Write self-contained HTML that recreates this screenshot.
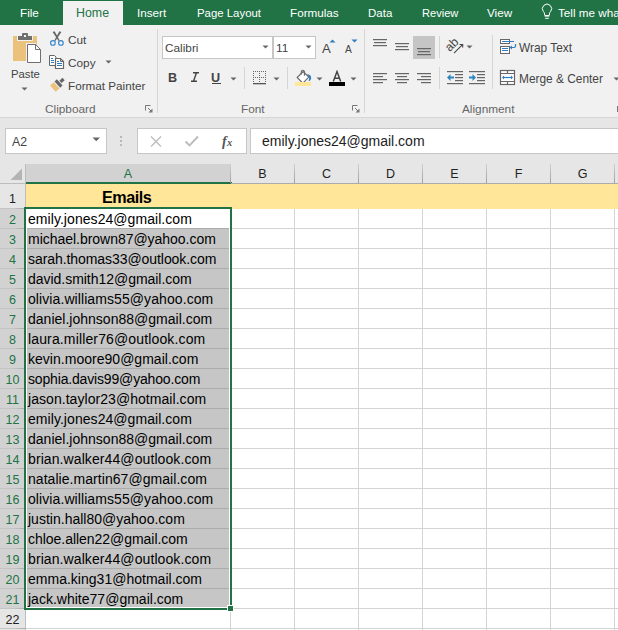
<!DOCTYPE html>
<html><head><meta charset="utf-8"><style>
html,body{margin:0;padding:0;}
body{width:618px;height:630px;overflow:hidden;position:relative;background:#fff;font-family:"Liberation Sans", sans-serif;}
body>div{position:absolute;}
</style></head><body>
<div style="left:0px;top:0px;width:618px;height:25px;background:#217346"></div>
<div style="left:63px;top:1px;width:60px;height:26px;background:#f1f1f1"></div>
<div style="left:20px;top:6px;font-size:11.7px;color:#ffffff;font-weight:normal;white-space:nowrap;line-height:normal;">File</div>
<div style="left:137px;top:6px;font-size:11.7px;color:#ffffff;font-weight:normal;white-space:nowrap;line-height:normal;">Insert</div>
<div style="left:197px;top:7px;font-size:11.4px;color:#ffffff;font-weight:normal;white-space:nowrap;line-height:normal;">Page Layout</div>
<div style="left:290px;top:6px;font-size:11.7px;color:#ffffff;font-weight:normal;white-space:nowrap;line-height:normal;">Formulas</div>
<div style="left:368px;top:7px;font-size:11.5px;color:#ffffff;font-weight:normal;white-space:nowrap;line-height:normal;">Data</div>
<div style="left:422px;top:7px;font-size:11.1px;color:#ffffff;font-weight:normal;white-space:nowrap;line-height:normal;">Review</div>
<div style="left:487px;top:6px;font-size:11.7px;color:#ffffff;font-weight:normal;white-space:nowrap;line-height:normal;">View</div>
<div style="left:558px;top:6px;font-size:11.7px;color:#ffffff;font-weight:normal;white-space:nowrap;line-height:normal;">Tell me wha</div>
<div style="left:76px;top:6px;font-size:12.4px;color:#217346;font-weight:normal;white-space:nowrap;line-height:normal;">Home</div>
<svg style="position:absolute;left:539px;top:3px" width="16" height="17" viewBox="0 0 16 17"><path d="M5.6 12.2V10.9C5.6 9.9 5 9.3 4.4 8.6A4.6 4.6 0 1 1 11.6 8.6C11 9.3 10.4 9.9 10.4 10.9V12.2" fill="none" stroke="#fff" stroke-width="1"/><path d="M5.6 12.8H10.4" stroke="#fff" stroke-width="1.6"/><path d="M6.2 15.3H9.8" stroke="#fff" stroke-width="1"/></svg>
<div style="left:0px;top:25px;width:618px;height:92px;background:#f1f1f1"></div>
<div style="left:0px;top:117px;width:618px;height:1px;background:#d6d6d6"></div>
<svg style="position:absolute;left:12px;top:32px" width="32" height="32" viewBox="0 0 32 32"><rect x="1" y="4" width="24" height="25" fill="#eac27c"/><rect x="5" y="3" width="16" height="6" fill="#f1f1f1"/><rect x="6" y="4" width="14" height="4" fill="#6f6f6f"/><rect x="10" y="1" width="6" height="4" rx="1" fill="#6f6f6f"/><rect x="12" y="3" width="2" height="2" fill="#f1f1f1"/><path d="M14 11H24V31H14z" fill="#f1f1f1"/><path d="M15.5 12.5H23.5L28.5 17.5V30.5H15.5z" fill="#fff" stroke="#6f6f6f" stroke-width="1"/><path d="M23.5 12.5V17.5H28.5" fill="none" stroke="#6f6f6f" stroke-width="1"/></svg>
<div style="left:11px;top:68px;font-size:11.3px;color:#444444;font-weight:normal;white-space:nowrap;line-height:normal;">Paste</div>
<svg style="position:absolute;left:21px;top:87px" width="8" height="5" viewBox="0 0 8 5"><path d="M0.5 0.5H6.5L3.5 3.5z" fill="#666666"/></svg>
<svg style="position:absolute;left:48px;top:30px" width="18" height="18" viewBox="0 0 18 18"><path d="M4.6 2.1L6.6 1.3L11.7 10.5L10.6 11.1z" fill="#666"/><path d="M13.4 2.1L11.4 1.3L6.3 10.5L7.4 11.1z" fill="#666"/><circle cx="4.9" cy="12.9" r="2.3" fill="none" stroke="#3487c9" stroke-width="1.15"/><circle cx="12.9" cy="12.9" r="2.3" fill="none" stroke="#3487c9" stroke-width="1.15"/></svg>
<div style="left:68px;top:33px;font-size:11.8px;color:#444444;font-weight:normal;white-space:nowrap;line-height:normal;">Cut</div>
<svg style="position:absolute;left:48px;top:54px" width="18" height="16" viewBox="0 0 18 16"><path d="M1.5 1.5H6.5L8 3V11.5H1.5z" fill="#fff" stroke="#666" stroke-width="1"/><path d="M3 4.5H5M3 6.5H6M3 8.5H6" stroke="#2e7dc1" stroke-width="1"/><path d="M7.5 4.5H12.5L15.5 7.5V14.5H7.5z" fill="#fff" stroke="#666" stroke-width="1.2"/><path d="M12.5 4.5V7.5H15.5" fill="none" stroke="#666" stroke-width="1"/><path d="M9 7.5H11M9 9.5H14M9 11.5H14" stroke="#2e7dc1" stroke-width="1"/></svg>
<div style="left:68px;top:56px;font-size:11.8px;color:#444444;font-weight:normal;white-space:nowrap;line-height:normal;">Copy</div>
<svg style="position:absolute;left:105px;top:60px" width="8" height="5" viewBox="0 0 8 5"><path d="M0.5 0.5H6.5L3.5 3.5z" fill="#666666"/></svg>
<svg style="position:absolute;left:46px;top:74px" width="22" height="22" viewBox="0 0 22 22"><g transform="translate(11.5 10.5) rotate(-42)"><rect x="4" y="-1.6" width="4.2" height="3.2" fill="#666"/><rect x="-0.2" y="-4.2" width="3.2" height="8.4" fill="#666"/><path d="M-6.3 -4.2H-1.2V4.2H-6.3z" fill="#eac27c"/></g></svg>
<div style="left:68px;top:79px;font-size:11.7px;color:#444444;font-weight:normal;white-space:nowrap;line-height:normal;">Format Painter</div>
<div style="left:45px;top:102px;font-size:11.8px;color:#666666;font-weight:normal;white-space:nowrap;line-height:normal;">Clipboard</div>
<svg style="position:absolute;left:145px;top:105px" width="9" height="9" viewBox="0 0 9 9"><path d="M0.5 5.5V0.5H5.5" fill="none" stroke="#777" stroke-width="1"/><path d="M3 3L7 7" stroke="#777" stroke-width="1"/><path d="M7.5 3.5V7.5H3.5z" fill="#777"/></svg>
<div style="left:157px;top:29px;width:1px;height:84px;background:#d5d5d5"></div>
<div style="left:162px;top:36px;width:111px;height:23px;background:#fff;border:1px solid #c6c6c6;box-sizing:border-box"></div>
<div style="left:165px;top:41px;font-size:11.8px;color:#444;font-weight:normal;white-space:nowrap;line-height:normal;">Calibri</div>
<svg style="position:absolute;left:262px;top:45px" width="8" height="5" viewBox="0 0 8 5"><path d="M0.5 0.5H6.5L3.5 3.5z" fill="#666666"/></svg>
<div style="left:273px;top:36px;width:43px;height:23px;background:#fff;border:1px solid #c6c6c6;box-sizing:border-box"></div>
<div style="left:276px;top:41px;font-size:11.8px;color:#444;font-weight:normal;white-space:nowrap;line-height:normal;">11</div>
<svg style="position:absolute;left:305px;top:45px" width="8" height="5" viewBox="0 0 8 5"><path d="M0.5 0.5H6.5L3.5 3.5z" fill="#666666"/></svg>
<div style="left:322px;top:41px;font-size:13.2px;color:#444;font-weight:normal;white-space:nowrap;line-height:normal;">A</div>
<svg style="position:absolute;left:329px;top:39px" width="8" height="5" viewBox="0 0 8 5"><path d="M0.5 3.5H6.5L3.5 0.5z" fill="#2e7dc1"/></svg>
<div style="left:345px;top:44px;font-size:10.2px;color:#444;font-weight:normal;white-space:nowrap;line-height:normal;">A</div>
<svg style="position:absolute;left:351px;top:39px" width="8" height="5" viewBox="0 0 8 5"><path d="M0.5 0.5H6.5L3.5 3.5z" fill="#2e7dc1"/></svg>
<div style="left:168px;top:71px;font-size:12.6px;color:#444;font-weight:bold;white-space:nowrap;line-height:normal;">B</div>
<svg style="position:absolute;left:189px;top:72px" width="12" height="11" viewBox="0 0 12 11"><path d="M4 0.8H10M2 9.2H8M7.5 0.8L4.5 9.2" stroke="#444" stroke-width="1.4" fill="none"/></svg>
<div style="left:211px;top:71px;font-size:12.6px;color:#444;font-weight:bold;white-space:nowrap;line-height:normal;">U</div>
<div style="left:212px;top:83px;width:9px;height:1px;background:#444"></div>
<svg style="position:absolute;left:230px;top:77px" width="8" height="5" viewBox="0 0 8 5"><path d="M0.5 0.5H6.5L3.5 3.5z" fill="#666666"/></svg>
<div style="left:244px;top:67px;width:1px;height:22px;background:#d5d5d5"></div>
<svg style="position:absolute;left:252px;top:70px" width="16" height="16" viewBox="0 0 16 16"><rect x="1" y="1" width="1" height="1" fill="#666"/><rect x="3" y="1" width="1" height="1" fill="#666"/><rect x="5" y="1" width="1" height="1" fill="#666"/><rect x="7" y="1" width="1" height="1" fill="#666"/><rect x="9" y="1" width="1" height="1" fill="#666"/><rect x="11" y="1" width="1" height="1" fill="#666"/><rect x="13" y="1" width="1" height="1" fill="#666"/><rect x="1" y="3" width="1" height="1" fill="#666"/><rect x="7" y="3" width="1" height="1" fill="#666"/><rect x="13" y="3" width="1" height="1" fill="#666"/><rect x="1" y="5" width="1" height="1" fill="#666"/><rect x="7" y="5" width="1" height="1" fill="#666"/><rect x="13" y="5" width="1" height="1" fill="#666"/><rect x="1" y="7" width="1" height="1" fill="#666"/><rect x="3" y="7" width="1" height="1" fill="#666"/><rect x="5" y="7" width="1" height="1" fill="#666"/><rect x="7" y="7" width="1" height="1" fill="#666"/><rect x="9" y="7" width="1" height="1" fill="#666"/><rect x="11" y="7" width="1" height="1" fill="#666"/><rect x="13" y="7" width="1" height="1" fill="#666"/><rect x="1" y="9" width="1" height="1" fill="#666"/><rect x="7" y="9" width="1" height="1" fill="#666"/><rect x="13" y="9" width="1" height="1" fill="#666"/><rect x="1" y="11" width="1" height="1" fill="#666"/><rect x="7" y="11" width="1" height="1" fill="#666"/><rect x="13" y="11" width="1" height="1" fill="#666"/><rect x="1" y="13" width="13" height="1.3" fill="#555"/></svg>
<svg style="position:absolute;left:273px;top:77px" width="8" height="5" viewBox="0 0 8 5"><path d="M0.5 0.5H6.5L3.5 3.5z" fill="#666666"/></svg>
<div style="left:287px;top:67px;width:1px;height:22px;background:#d5d5d5"></div>
<svg style="position:absolute;left:294px;top:68px" width="20" height="20" viewBox="0 0 20 20"><path d="M3.2 9.5L9.2 3.5L14.8 9.1L8.8 15.1z" fill="#fff" stroke="#666" stroke-width="1.1"/><path d="M7.3 6.5V3.5A1.6 1.6 0 0 1 10.4 3.5V7.8" fill="none" stroke="#666" stroke-width="1.1"/><path d="M13.2 6.3C15.6 6.4 17.3 7.9 17.2 9.9C17.1 11.5 15.7 13 14.6 13.2L15.3 9.6z" fill="#2e7dc1"/><rect x="1" y="14" width="16" height="4" fill="#ffe699"/></svg>
<svg style="position:absolute;left:316px;top:77px" width="8" height="5" viewBox="0 0 8 5"><path d="M0.5 0.5H6.5L3.5 3.5z" fill="#666666"/></svg>
<svg style="position:absolute;left:330px;top:70px" width="14" height="13" viewBox="0 0 14 13"><path d="M3.3 11.6L7 1.6L10.7 11.6M4.6 8.3H9.4" fill="none" stroke="#444" stroke-width="1.5"/></svg>
<div style="left:329px;top:82px;width:16px;height:4px;background:#000"></div>
<svg style="position:absolute;left:350px;top:77px" width="8" height="5" viewBox="0 0 8 5"><path d="M0.5 0.5H6.5L3.5 3.5z" fill="#666666"/></svg>
<div style="left:241px;top:102px;font-size:11.8px;color:#666666;font-weight:normal;white-space:nowrap;line-height:normal;">Font</div>
<svg style="position:absolute;left:352px;top:105px" width="9" height="9" viewBox="0 0 9 9"><path d="M0.5 5.5V0.5H5.5" fill="none" stroke="#777" stroke-width="1"/><path d="M3 3L7 7" stroke="#777" stroke-width="1"/><path d="M7.5 3.5V7.5H3.5z" fill="#777"/></svg>
<div style="left:364px;top:29px;width:1px;height:84px;background:#d5d5d5"></div>
<svg style="position:absolute;left:372px;top:39px" width="20" height="16" viewBox="0 0 20 16"><rect x="1" y="0" width="14" height="1.2" fill="#666"/><rect x="2" y="3" width="12" height="1.2" fill="#666"/><rect x="1" y="6" width="14" height="1.2" fill="#666"/></svg>
<svg style="position:absolute;left:394px;top:43px" width="20" height="16" viewBox="0 0 20 16"><rect x="1" y="0" width="14" height="1.2" fill="#666"/><rect x="2" y="3" width="12" height="1.2" fill="#666"/><rect x="1" y="6" width="14" height="1.2" fill="#666"/></svg>
<div style="left:413px;top:36px;width:22px;height:23px;background:#c5c5c5"></div>
<svg style="position:absolute;left:416px;top:48px" width="20" height="16" viewBox="0 0 20 16"><rect x="1" y="0" width="14" height="1.2" fill="#666"/><rect x="2" y="3" width="12" height="1.2" fill="#666"/><rect x="1" y="6" width="14" height="1.2" fill="#666"/></svg>
<div style="left:439px;top:36px;width:1px;height:22px;background:#d5d5d5"></div>
<svg style="position:absolute;left:444px;top:36px" width="22" height="20" viewBox="0 0 22 20"><g transform="rotate(-45 9 9)"><text x="1.5" y="11.8" font-family="Liberation Sans" font-size="12.3" fill="#444">ab</text></g><path d="M10 17.2L18.5 8.7" stroke="#444" stroke-width="1.1"/><path d="M15.6 8.5H18.7V11.6" fill="none" stroke="#444" stroke-width="1.1"/></svg>
<svg style="position:absolute;left:466px;top:45px" width="8" height="5" viewBox="0 0 8 5"><path d="M0.5 0.5H6.5L3.5 3.5z" fill="#666666"/></svg>
<svg style="position:absolute;left:372px;top:73px" width="20" height="16" viewBox="0 0 20 16"><rect x="1" y="0" width="14" height="1.2" fill="#666"/><rect x="1" y="3" width="10" height="1.2" fill="#666"/><rect x="1" y="6" width="14" height="1.2" fill="#666"/><rect x="1" y="9" width="10" height="1.2" fill="#666"/></svg>
<svg style="position:absolute;left:394px;top:73px" width="20" height="16" viewBox="0 0 20 16"><rect x="1" y="0" width="14" height="1.2" fill="#666"/><rect x="3" y="3" width="10" height="1.2" fill="#666"/><rect x="1" y="6" width="14" height="1.2" fill="#666"/><rect x="3" y="9" width="10" height="1.2" fill="#666"/></svg>
<svg style="position:absolute;left:416px;top:73px" width="20" height="16" viewBox="0 0 20 16"><rect x="1" y="0" width="14" height="1.2" fill="#666"/><rect x="5" y="3" width="10" height="1.2" fill="#666"/><rect x="1" y="6" width="14" height="1.2" fill="#666"/><rect x="5" y="9" width="10" height="1.2" fill="#666"/></svg>
<div style="left:439px;top:67px;width:1px;height:22px;background:#d5d5d5"></div>
<svg style="position:absolute;left:446px;top:70px" width="18" height="16" viewBox="0 0 18 16"><rect x="1" y="1" width="16" height="1.2" fill="#666"/><rect x="9" y="4" width="8" height="1.2" fill="#666"/><rect x="9" y="7" width="8" height="1.2" fill="#666"/><rect x="9" y="10" width="8" height="1.2" fill="#666"/><rect x="1" y="13" width="16" height="1.2" fill="#666"/><path d="M1 7.5L4.5 4V6.5H8V8.5H4.5V11z" fill="#2e86c1"/></svg>
<svg style="position:absolute;left:468px;top:70px" width="18" height="16" viewBox="0 0 18 16"><rect x="1" y="1" width="16" height="1.2" fill="#666"/><rect x="9" y="4" width="8" height="1.2" fill="#666"/><rect x="9" y="7" width="8" height="1.2" fill="#666"/><rect x="9" y="10" width="8" height="1.2" fill="#666"/><rect x="1" y="13" width="16" height="1.2" fill="#666"/><path d="M8 7.5L4.5 4V6.5H1V8.5H4.5V11z" fill="#2e86c1"/></svg>
<div style="left:492px;top:35px;width:1px;height:54px;background:#d5d5d5"></div>
<svg style="position:absolute;left:499px;top:38px" width="18" height="18" viewBox="0 0 18 18"><rect x="1.5" y="1.5" width="9" height="4" fill="#fff" stroke="#666" stroke-width="1"/><rect x="1.5" y="8.5" width="9" height="7" fill="#fff" stroke="#666" stroke-width="1"/><path d="M3 3.5H15M3 10.5H9M3 12.5H9" stroke="#2e7dc1" stroke-width="1"/><path d="M16.5 6V8A1.5 1.5 0 0 1 15 9.5H11" fill="none" stroke="#2e7dc1" stroke-width="1.2"/><path d="M10.5 9.5L13 7.5V11.5z" fill="#2e7dc1"/></svg>
<div style="left:519px;top:41px;font-size:11.9px;color:#444444;font-weight:normal;white-space:nowrap;line-height:normal;">Wrap Text</div>
<svg style="position:absolute;left:499px;top:69px" width="18" height="18" viewBox="0 0 18 18"><rect x="1.5" y="1.5" width="14" height="14" fill="#fff" stroke="#666" stroke-width="1.2"/><path d="M1.5 4.5H15.5M1.5 12.5H15.5M8.5 1.5V4.5M8.5 12.5V15.5" stroke="#666" stroke-width="1.2"/><path d="M4 8.5H13" stroke="#2e7dc1" stroke-width="1.2"/><path d="M3 8.5L5 6.5V10.5z M14 8.5L12 6.5V10.5z" fill="#2e7dc1"/></svg>
<div style="left:519px;top:72px;font-size:11.9px;color:#444444;font-weight:normal;white-space:nowrap;line-height:normal;">Merge &amp; Center</div>
<svg style="position:absolute;left:613px;top:77px" width="8" height="5" viewBox="0 0 8 5"><path d="M0.5 0.5H6.5L3.5 3.5z" fill="#666666"/></svg>
<div style="left:462px;top:102px;font-size:11.8px;color:#666666;font-weight:normal;white-space:nowrap;line-height:normal;">Alignment</div>
<div style="left:617px;top:106px;width:1px;height:6px;background:#777"></div>
<div style="left:0px;top:118px;width:618px;height:46px;background:#e6e6e6"></div>
<div style="left:5px;top:128px;width:102px;height:26px;background:#fff;border:1px solid #c6c6c6;box-sizing:border-box"></div>
<div style="left:12px;top:135px;font-size:12.3px;color:#444;font-weight:normal;white-space:nowrap;line-height:normal;">A2</div>
<svg style="position:absolute;left:92px;top:137px" width="10" height="6" viewBox="0 0 10 6"><path d="M0.5 0.5H8L4.25 4.25z" fill="#666666"/></svg>
<div style="left:120px;top:136px;width:2px;height:2px;background:#a8a8a8;border-radius:1px"></div>
<div style="left:120px;top:140px;width:2px;height:2px;background:#a8a8a8;border-radius:1px"></div>
<div style="left:120px;top:144px;width:2px;height:2px;background:#a8a8a8;border-radius:1px"></div>
<div style="left:137px;top:128px;width:110px;height:26px;background:#fff;border:1px solid #c6c6c6;box-sizing:border-box"></div>
<svg style="position:absolute;left:150px;top:135px" width="13" height="13" viewBox="0 0 13 13"><path d="M1 1.5L11 11.5M11 1.5L1 11.5" stroke="#bcbcbc" stroke-width="1.3"/></svg>
<svg style="position:absolute;left:184px;top:135px" width="16" height="13" viewBox="0 0 16 13"><path d="M1.5 6.5L5.5 10.5L14 1.5" fill="none" stroke="#bcbcbc" stroke-width="1.9"/></svg>
<svg style="position:absolute;left:220px;top:133px" width="16" height="16" viewBox="0 0 16 16"><text x="2" y="12.5" font-family="Liberation Serif" font-style="italic" font-weight="bold" font-size="14" fill="#555">f</text><text x="7" y="12.5" font-family="Liberation Serif" font-style="italic" font-weight="bold" font-size="10.5" fill="#555">x</text></svg>
<div style="left:250px;top:128px;width:370px;height:26px;background:#fff;border:1px solid #c6c6c6;box-sizing:border-box"></div>
<div style="left:262px;top:133px;font-size:14px;color:#222;font-weight:normal;white-space:nowrap;line-height:normal;">emily.jones24@gmail.com</div>
<div style="left:0px;top:164px;width:618px;height:20px;background:#e6e6e6"></div>
<svg style="position:absolute;left:0px;top:164px" width="26" height="20" viewBox="0 0 26 20"><path d="M10.5 16H22V4.5z" fill="#b4b4b4"/></svg>
<div style="left:25px;top:164px;width:1px;height:466px;background:#bdbdbd"></div>
<div style="left:26px;top:164px;width:205px;height:18px;background:#d2d2d2"></div>
<div style="left:26px;top:182px;width:206px;height:2px;background:#217346"></div>
<div style="left:231px;top:183px;width:387px;height:1px;background:#ababab"></div>
<div style="left:0px;top:183px;width:25px;height:1px;background:#bdbdbd"></div>
<div style="left:230px;top:164px;width:1px;height:19px;background:linear-gradient(#d0d0d0,#9e9e9e)"></div>
<div style="left:294px;top:164px;width:1px;height:19px;background:linear-gradient(#d0d0d0,#9e9e9e)"></div>
<div style="left:358px;top:164px;width:1px;height:19px;background:linear-gradient(#d0d0d0,#9e9e9e)"></div>
<div style="left:422px;top:164px;width:1px;height:19px;background:linear-gradient(#d0d0d0,#9e9e9e)"></div>
<div style="left:486px;top:164px;width:1px;height:19px;background:linear-gradient(#d0d0d0,#9e9e9e)"></div>
<div style="left:550px;top:164px;width:1px;height:19px;background:linear-gradient(#d0d0d0,#9e9e9e)"></div>
<div style="left:614px;top:164px;width:1px;height:19px;background:linear-gradient(#d0d0d0,#9e9e9e)"></div>
<div style="left:26px;top:167px;width:204px;text-align:center;font-size:12.5px;color:#217346;line-height:normal">A</div>
<div style="left:231px;top:167px;width:63px;text-align:center;font-size:12.5px;color:#222;line-height:normal">B</div>
<div style="left:295px;top:167px;width:63px;text-align:center;font-size:12.5px;color:#222;line-height:normal">C</div>
<div style="left:359px;top:167px;width:63px;text-align:center;font-size:12.5px;color:#222;line-height:normal">D</div>
<div style="left:423px;top:167px;width:63px;text-align:center;font-size:12.5px;color:#222;line-height:normal">E</div>
<div style="left:487px;top:167px;width:63px;text-align:center;font-size:12.5px;color:#222;line-height:normal">F</div>
<div style="left:551px;top:167px;width:63px;text-align:center;font-size:12.5px;color:#222;line-height:normal">G</div>
<div style="left:26px;top:184px;width:592px;height:446px;background:#fff"></div>
<div style="left:0px;top:184px;width:25px;height:446px;background:#e6e6e6"></div>
<div style="left:0px;top:209px;width:25px;height:400px;background:#d2d2d2"></div>
<div style="left:294px;top:209px;width:1px;height:421px;background:#d4d4d4"></div>
<div style="left:358px;top:209px;width:1px;height:421px;background:#d4d4d4"></div>
<div style="left:422px;top:209px;width:1px;height:421px;background:#d4d4d4"></div>
<div style="left:486px;top:209px;width:1px;height:421px;background:#d4d4d4"></div>
<div style="left:550px;top:209px;width:1px;height:421px;background:#d4d4d4"></div>
<div style="left:614px;top:209px;width:1px;height:421px;background:#d4d4d4"></div>
<div style="left:230px;top:609px;width:1px;height:21px;background:#d4d4d4"></div>
<div style="left:0px;top:228px;width:25px;height:1px;background:linear-gradient(to right,#c4c4c4 55%,#a9a9a9)"></div>
<div style="left:231px;top:228px;width:387px;height:1px;background:#d4d4d4"></div>
<div style="left:0px;top:248px;width:25px;height:1px;background:linear-gradient(to right,#c4c4c4 55%,#a9a9a9)"></div>
<div style="left:231px;top:248px;width:387px;height:1px;background:#d4d4d4"></div>
<div style="left:0px;top:268px;width:25px;height:1px;background:linear-gradient(to right,#c4c4c4 55%,#a9a9a9)"></div>
<div style="left:231px;top:268px;width:387px;height:1px;background:#d4d4d4"></div>
<div style="left:0px;top:288px;width:25px;height:1px;background:linear-gradient(to right,#c4c4c4 55%,#a9a9a9)"></div>
<div style="left:231px;top:288px;width:387px;height:1px;background:#d4d4d4"></div>
<div style="left:0px;top:308px;width:25px;height:1px;background:linear-gradient(to right,#c4c4c4 55%,#a9a9a9)"></div>
<div style="left:231px;top:308px;width:387px;height:1px;background:#d4d4d4"></div>
<div style="left:0px;top:328px;width:25px;height:1px;background:linear-gradient(to right,#c4c4c4 55%,#a9a9a9)"></div>
<div style="left:231px;top:328px;width:387px;height:1px;background:#d4d4d4"></div>
<div style="left:0px;top:348px;width:25px;height:1px;background:linear-gradient(to right,#c4c4c4 55%,#a9a9a9)"></div>
<div style="left:231px;top:348px;width:387px;height:1px;background:#d4d4d4"></div>
<div style="left:0px;top:368px;width:25px;height:1px;background:linear-gradient(to right,#c4c4c4 55%,#a9a9a9)"></div>
<div style="left:231px;top:368px;width:387px;height:1px;background:#d4d4d4"></div>
<div style="left:0px;top:388px;width:25px;height:1px;background:linear-gradient(to right,#c4c4c4 55%,#a9a9a9)"></div>
<div style="left:231px;top:388px;width:387px;height:1px;background:#d4d4d4"></div>
<div style="left:0px;top:408px;width:25px;height:1px;background:linear-gradient(to right,#c4c4c4 55%,#a9a9a9)"></div>
<div style="left:231px;top:408px;width:387px;height:1px;background:#d4d4d4"></div>
<div style="left:0px;top:428px;width:25px;height:1px;background:linear-gradient(to right,#c4c4c4 55%,#a9a9a9)"></div>
<div style="left:231px;top:428px;width:387px;height:1px;background:#d4d4d4"></div>
<div style="left:0px;top:448px;width:25px;height:1px;background:linear-gradient(to right,#c4c4c4 55%,#a9a9a9)"></div>
<div style="left:231px;top:448px;width:387px;height:1px;background:#d4d4d4"></div>
<div style="left:0px;top:468px;width:25px;height:1px;background:linear-gradient(to right,#c4c4c4 55%,#a9a9a9)"></div>
<div style="left:231px;top:468px;width:387px;height:1px;background:#d4d4d4"></div>
<div style="left:0px;top:488px;width:25px;height:1px;background:linear-gradient(to right,#c4c4c4 55%,#a9a9a9)"></div>
<div style="left:231px;top:488px;width:387px;height:1px;background:#d4d4d4"></div>
<div style="left:0px;top:508px;width:25px;height:1px;background:linear-gradient(to right,#c4c4c4 55%,#a9a9a9)"></div>
<div style="left:231px;top:508px;width:387px;height:1px;background:#d4d4d4"></div>
<div style="left:0px;top:528px;width:25px;height:1px;background:linear-gradient(to right,#c4c4c4 55%,#a9a9a9)"></div>
<div style="left:231px;top:528px;width:387px;height:1px;background:#d4d4d4"></div>
<div style="left:0px;top:548px;width:25px;height:1px;background:linear-gradient(to right,#c4c4c4 55%,#a9a9a9)"></div>
<div style="left:231px;top:548px;width:387px;height:1px;background:#d4d4d4"></div>
<div style="left:0px;top:568px;width:25px;height:1px;background:linear-gradient(to right,#c4c4c4 55%,#a9a9a9)"></div>
<div style="left:231px;top:568px;width:387px;height:1px;background:#d4d4d4"></div>
<div style="left:0px;top:588px;width:25px;height:1px;background:linear-gradient(to right,#c4c4c4 55%,#a9a9a9)"></div>
<div style="left:231px;top:588px;width:387px;height:1px;background:#d4d4d4"></div>
<div style="left:0px;top:608px;width:25px;height:1px;background:linear-gradient(to right,#c4c4c4 55%,#a9a9a9)"></div>
<div style="left:231px;top:608px;width:387px;height:1px;background:#d4d4d4"></div>
<div style="left:0px;top:628px;width:25px;height:1px;background:linear-gradient(to right,#c4c4c4 55%,#a9a9a9)"></div>
<div style="left:231px;top:628px;width:387px;height:1px;background:#d4d4d4"></div>
<div style="left:0px;top:208px;width:25px;height:1px;background:linear-gradient(to right,#c4c4c4 55%,#a9a9a9)"></div>
<div style="left:26px;top:628px;width:205px;height:1px;background:#d4d4d4"></div>
<div style="left:26px;top:184px;width:592px;height:25px;background:#ffe699"></div>
<div style="left:27px;top:229px;width:202px;height:378px;background:#c6c6c6"></div>
<div style="left:27px;top:228px;width:202px;height:1px;background:#acacac"></div>
<div style="left:27px;top:248px;width:202px;height:1px;background:#acacac"></div>
<div style="left:27px;top:268px;width:202px;height:1px;background:#acacac"></div>
<div style="left:27px;top:288px;width:202px;height:1px;background:#acacac"></div>
<div style="left:27px;top:308px;width:202px;height:1px;background:#acacac"></div>
<div style="left:27px;top:328px;width:202px;height:1px;background:#acacac"></div>
<div style="left:27px;top:348px;width:202px;height:1px;background:#acacac"></div>
<div style="left:27px;top:368px;width:202px;height:1px;background:#acacac"></div>
<div style="left:27px;top:388px;width:202px;height:1px;background:#acacac"></div>
<div style="left:27px;top:408px;width:202px;height:1px;background:#acacac"></div>
<div style="left:27px;top:428px;width:202px;height:1px;background:#acacac"></div>
<div style="left:27px;top:448px;width:202px;height:1px;background:#acacac"></div>
<div style="left:27px;top:468px;width:202px;height:1px;background:#acacac"></div>
<div style="left:27px;top:488px;width:202px;height:1px;background:#acacac"></div>
<div style="left:27px;top:508px;width:202px;height:1px;background:#acacac"></div>
<div style="left:27px;top:528px;width:202px;height:1px;background:#acacac"></div>
<div style="left:27px;top:548px;width:202px;height:1px;background:#acacac"></div>
<div style="left:27px;top:568px;width:202px;height:1px;background:#acacac"></div>
<div style="left:27px;top:588px;width:202px;height:1px;background:#acacac"></div>
<div style="left:24px;top:207px;width:208px;height:2px;background:#217346"></div>
<div style="left:24px;top:608px;width:203px;height:2px;background:#217346"></div>
<div style="left:24px;top:207px;width:2px;height:403px;background:#217346"></div>
<div style="left:230px;top:207px;width:2px;height:398px;background:#217346"></div>
<div style="left:227px;top:605px;width:7px;height:7px;background:#fff"></div>
<div style="left:228px;top:606px;width:5px;height:5px;background:#217346"></div>
<div style="left:0px;top:192px;width:25px;text-align:center;font-size:12.5px;color:#222;line-height:normal">1</div>
<div style="left:0px;top:213px;width:25px;text-align:center;font-size:12.5px;color:#217346;line-height:normal">2</div>
<div style="left:0px;top:233px;width:25px;text-align:center;font-size:12.5px;color:#217346;line-height:normal">3</div>
<div style="left:0px;top:253px;width:25px;text-align:center;font-size:12.5px;color:#217346;line-height:normal">4</div>
<div style="left:0px;top:273px;width:25px;text-align:center;font-size:12.5px;color:#217346;line-height:normal">5</div>
<div style="left:0px;top:293px;width:25px;text-align:center;font-size:12.5px;color:#217346;line-height:normal">6</div>
<div style="left:0px;top:313px;width:25px;text-align:center;font-size:12.5px;color:#217346;line-height:normal">7</div>
<div style="left:0px;top:333px;width:25px;text-align:center;font-size:12.5px;color:#217346;line-height:normal">8</div>
<div style="left:0px;top:353px;width:25px;text-align:center;font-size:12.5px;color:#217346;line-height:normal">9</div>
<div style="left:0px;top:373px;width:25px;text-align:center;font-size:12.5px;color:#217346;line-height:normal">10</div>
<div style="left:0px;top:393px;width:25px;text-align:center;font-size:12.5px;color:#217346;line-height:normal">11</div>
<div style="left:0px;top:413px;width:25px;text-align:center;font-size:12.5px;color:#217346;line-height:normal">12</div>
<div style="left:0px;top:433px;width:25px;text-align:center;font-size:12.5px;color:#217346;line-height:normal">13</div>
<div style="left:0px;top:453px;width:25px;text-align:center;font-size:12.5px;color:#217346;line-height:normal">14</div>
<div style="left:0px;top:473px;width:25px;text-align:center;font-size:12.5px;color:#217346;line-height:normal">15</div>
<div style="left:0px;top:493px;width:25px;text-align:center;font-size:12.5px;color:#217346;line-height:normal">16</div>
<div style="left:0px;top:513px;width:25px;text-align:center;font-size:12.5px;color:#217346;line-height:normal">17</div>
<div style="left:0px;top:533px;width:25px;text-align:center;font-size:12.5px;color:#217346;line-height:normal">18</div>
<div style="left:0px;top:553px;width:25px;text-align:center;font-size:12.5px;color:#217346;line-height:normal">19</div>
<div style="left:0px;top:573px;width:25px;text-align:center;font-size:12.5px;color:#217346;line-height:normal">20</div>
<div style="left:0px;top:593px;width:25px;text-align:center;font-size:12.5px;color:#217346;line-height:normal">21</div>
<div style="left:0px;top:613px;width:25px;text-align:center;font-size:12.5px;color:#222;line-height:normal">22</div>
<div style="left:102px;top:188px;font-size:16.2px;color:#000;font-weight:bold;white-space:nowrap;line-height:normal;letter-spacing:-0.5px">Emails</div>
<div style="left:28px;top:211px;font-size:14px;color:#000;font-weight:normal;white-space:nowrap;line-height:normal;letter-spacing:0.059px">emily.jones24@gmail.com</div>
<div style="left:28px;top:231px;font-size:14px;color:#000;font-weight:normal;white-space:nowrap;line-height:normal;letter-spacing:-0.029px">michael.brown87@yahoo.com</div>
<div style="left:28px;top:251px;font-size:14px;color:#000;font-weight:normal;white-space:nowrap;line-height:normal;letter-spacing:-0.068px">sarah.thomas33@outlook.com</div>
<div style="left:28px;top:271px;font-size:14px;color:#000;font-weight:normal;white-space:nowrap;line-height:normal;letter-spacing:-0.032px">david.smith12@gmail.com</div>
<div style="left:28px;top:291px;font-size:14px;color:#000;font-weight:normal;white-space:nowrap;line-height:normal;letter-spacing:0.085px">olivia.williams55@yahoo.com</div>
<div style="left:28px;top:311px;font-size:14px;color:#000;font-weight:normal;white-space:nowrap;line-height:normal;letter-spacing:0.012px">daniel.johnson88@gmail.com</div>
<div style="left:28px;top:331px;font-size:14px;color:#000;font-weight:normal;white-space:nowrap;line-height:normal;letter-spacing:0.140px">laura.miller76@outlook.com</div>
<div style="left:28px;top:351px;font-size:14px;color:#000;font-weight:normal;white-space:nowrap;line-height:normal;letter-spacing:0.023px">kevin.moore90@gmail.com</div>
<div style="left:28px;top:371px;font-size:14px;color:#000;font-weight:normal;white-space:nowrap;line-height:normal;letter-spacing:-0.165px">sophia.davis99@yahoo.com</div>
<div style="left:28px;top:391px;font-size:14px;color:#000;font-weight:normal;white-space:nowrap;line-height:normal;letter-spacing:0.052px">jason.taylor23@hotmail.com</div>
<div style="left:28px;top:411px;font-size:14px;color:#000;font-weight:normal;white-space:nowrap;line-height:normal;letter-spacing:0.059px">emily.jones24@gmail.com</div>
<div style="left:28px;top:431px;font-size:14px;color:#000;font-weight:normal;white-space:nowrap;line-height:normal;letter-spacing:0.012px">daniel.johnson88@gmail.com</div>
<div style="left:28px;top:451px;font-size:14px;color:#000;font-weight:normal;white-space:nowrap;line-height:normal;letter-spacing:0.092px">brian.walker44@outlook.com</div>
<div style="left:28px;top:471px;font-size:14px;color:#000;font-weight:normal;white-space:nowrap;line-height:normal;letter-spacing:0.052px">natalie.martin67@gmail.com</div>
<div style="left:28px;top:491px;font-size:14px;color:#000;font-weight:normal;white-space:nowrap;line-height:normal;letter-spacing:0.085px">olivia.williams55@yahoo.com</div>
<div style="left:28px;top:511px;font-size:14px;color:#000;font-weight:normal;white-space:nowrap;line-height:normal;letter-spacing:0.009px">justin.hall80@yahoo.com</div>
<div style="left:28px;top:531px;font-size:14px;color:#000;font-weight:normal;white-space:nowrap;line-height:normal;letter-spacing:-0.036px">chloe.allen22@gmail.com</div>
<div style="left:28px;top:551px;font-size:14px;color:#000;font-weight:normal;white-space:nowrap;line-height:normal;letter-spacing:0.092px">brian.walker44@outlook.com</div>
<div style="left:28px;top:571px;font-size:14px;color:#000;font-weight:normal;white-space:nowrap;line-height:normal;letter-spacing:0.014px">emma.king31@hotmail.com</div>
<div style="left:28px;top:591px;font-size:14px;color:#000;font-weight:normal;white-space:nowrap;line-height:normal;letter-spacing:0.010px">jack.white77@gmail.com</div>
</body></html>
